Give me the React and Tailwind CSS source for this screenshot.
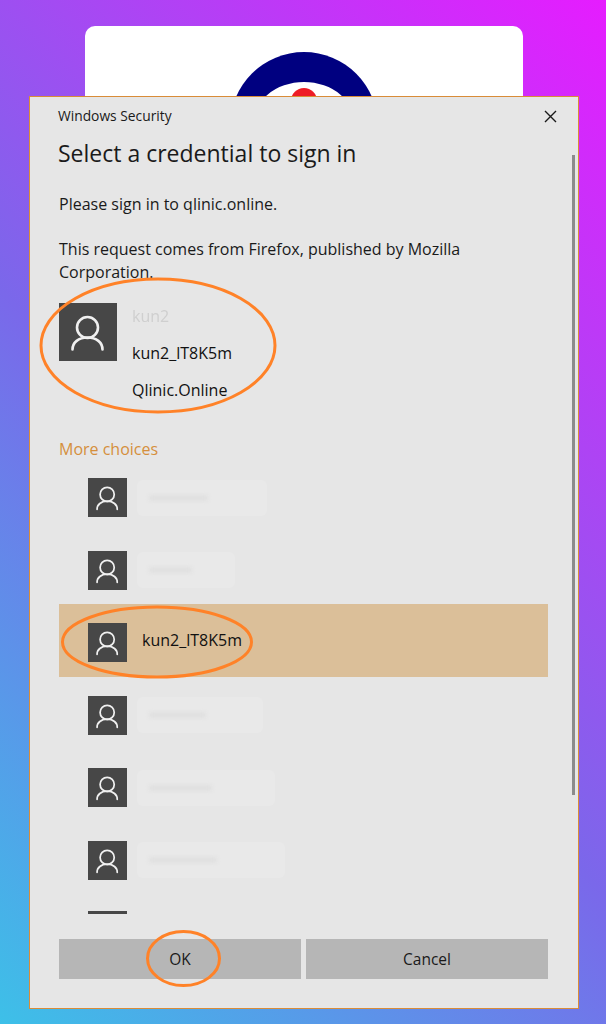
const FONT = "font-['Open_Sans','Noto_Sans',sans-serif]"

// Rows of the "More choices" list; only one of them has a readable name.
const CHOICES = [
  { patch: 'w-[130px]' },
  { patch: 'w-[98px]' },
  { name: 'kun2_lT8K5m', selected: true },
  { patch: 'w-[126px]' },
  { patch: 'w-[138px]' },
  { patch: 'w-[148px]' },
]

function PersonIcon({ className }) {
  return (
    <span className={`flex shrink-0 bg-[#474747] ${className}`}>
      <svg viewBox="0 0 58 58" className="h-full w-full" fill="none" stroke="#f0f0f0" strokeWidth="2.6" strokeLinecap="round">
        <circle cx="28.5" cy="24.5" r="10.5" />
        <path d="M13.5 46.5c0-7 6-12 15-12s15 5 15 12" />
      </svg>
    </span>
  )
}

// Smudged-out account name
function Redacted({ width }) {
  return (
    <div className={`flex h-[36px] items-center rounded-md bg-[#e9e9e9] pl-3 ${width}`}>
      <div className="h-[4px] w-1/2 rounded-full bg-[#dcdcdc] blur-[2px]" />
    </div>
  )
}

function ChoiceRow({ name, patch, selected }) {
  return (
    <div className={`flex h-[72.5px] items-center pl-[29px] ${selected ? 'bg-[#dbbf99]' : 'pt-[5px]'}`}>
      <PersonIcon className={`h-[39px] w-[39px] ${selected ? 'mt-[5px]' : ''}`} />
      {name ? (
        <span className="ml-[15px] text-[16px] text-[#111]">{name}</span>
      ) : (
        <div className="ml-[10px]">
          <Redacted width={patch} />
        </div>
      )}
    </div>
  )
}

export default function App() {
  return (
    <div className={`relative h-[1024px] w-[606px] overflow-hidden bg-linear-[45deg] from-[#3dc0e8] via-[#7a68ea] via-45% to-[#e61cff] pt-[26px] ${FONT}`}>
      {/* Page behind the dialog */}
      <div className="ml-[85px] mr-[83px] flex h-[300px] justify-center rounded-[10px] bg-white">
        <svg width="160" height="80" viewBox="0 0 160 80" className="mt-[26px]">
          <circle cx="80" cy="74" r="74" fill="#000080" />
          <ellipse cx="80" cy="74" rx="52" ry="44" fill="#fff" />
          <path d="M67 80V49a13 13 0 0 1 26 0v31z" fill="#ee1c25" />
        </svg>
      </div>

      {/* Windows Security dialog */}
      <div className="absolute left-[29px] top-[96px] flex h-[913px] w-[550px] flex-col border-[1.5px] border-[#d98c38] bg-[#e6e6e6] text-[#1a1a1a]">
        <div className="flex items-center justify-between pl-[28px] pr-[21px] pt-[9px]">
          <span className="text-[13.8px] leading-[20px]">Windows Security</span>
          <svg width="13" height="13" viewBox="0 0 13 13" stroke="#1a1a1a" strokeWidth="1.4">
            <path d="M1 1l11 11M12 1L1 12" />
          </svg>
        </div>
        <h1 className="mt-[11px] pl-[28px] text-[23px] leading-[32px]">Select a credential to sign in</h1>

        <div className="min-h-0 flex-1 overflow-hidden">
          <div className="px-[29px] pt-[24px] text-[16px] leading-[23px]">
            <p>Please sign in to qlinic.online.</p>
            <p className="mt-[22px] w-[440px]">This request comes from Firefox, published by Mozilla Corporation.</p>
          </div>

          <div className="mt-[19px] flex pl-[29px]">
            <PersonIcon className="h-[58px] w-[58px]" />
            <div className="-mt-[5px] ml-[15px] flex flex-col text-[16px] leading-[37px] text-[#111]">
              <span className="text-[#cfcfcf] blur-[0.6px]">kun2</span>
              <span>kun2_lT8K5m</span>
              <span>Qlinic.Online</span>
            </div>
          </div>

          <p className="mt-[29px] pl-[29px] text-[16px] leading-[22px] text-[#d58f3c]">More choices</p>

          <div className="-mt-[1px] ml-[29px] w-[489px]">
            {CHOICES.map((row, i) => (
              <ChoiceRow key={i} {...row} />
            ))}
            <div className="ml-[29px] mt-[17px] h-[3px] w-[39px] bg-[#474747]" />
          </div>
        </div>

        <div className="flex gap-[5px] pb-[29px] pl-[29px] pr-[30px] pt-[25px]">
          <button className="h-[40px] flex-1 bg-[#b6b6b6] pt-[1px] text-[15.5px]">OK</button>
          <button className="h-[40px] flex-1 bg-[#b6b6b6] pt-[1px] text-[15.5px]">Cancel</button>
        </div>

        {/* Scrollbar thumb */}
        <div className="absolute left-[542px] top-[58px] h-[640px] w-[3px] bg-[#8c8c8c]" />
      </div>

      {/* Hand-drawn annotation rings on top of the screenshot */}
      <svg className="pointer-events-none absolute inset-0" width="606" height="1024" fill="none" stroke="#ff8228" strokeWidth="3">
        <ellipse cx="158" cy="345.5" rx="117" ry="66.5" />
        <ellipse cx="157" cy="642" rx="94.5" ry="35" />
        <ellipse cx="183.5" cy="958.5" rx="36" ry="27" />
      </svg>
    </div>
  )
}
